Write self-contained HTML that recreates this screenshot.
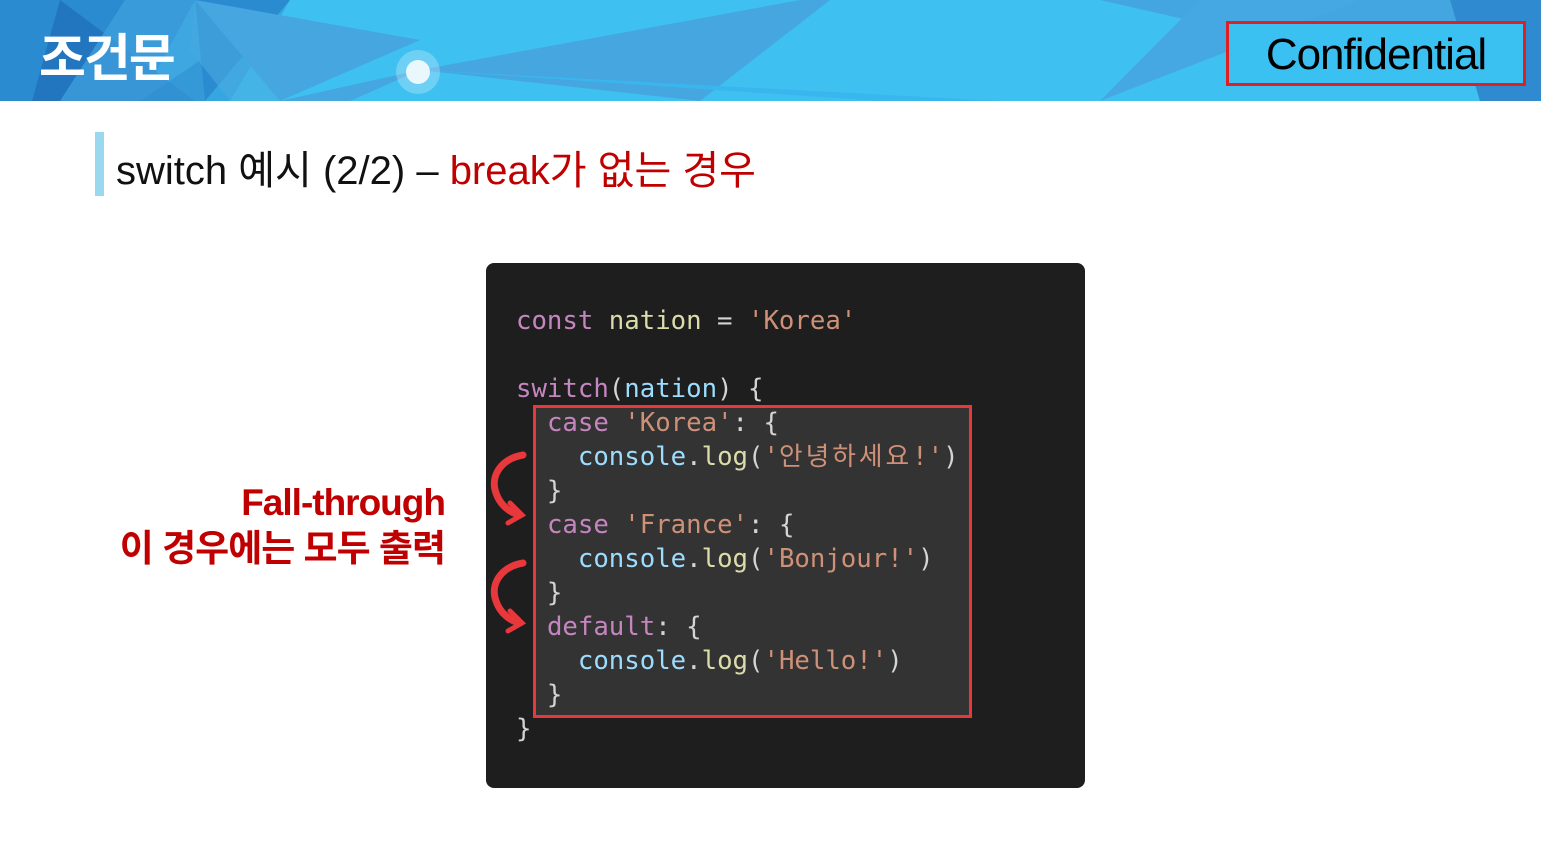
<!DOCTYPE html><html><head><meta charset="utf-8"><style>
body{margin:0;width:1541px;height:865px;background:#fff;position:relative;overflow:hidden;font-family:"Liberation Sans","Noto Sans CJK KR",sans-serif}
.hdr{position:absolute;left:0;top:0;width:1541px;height:101px;background:#3ec0f0;overflow:hidden}
.code{position:absolute;left:486px;top:263px;width:599px;height:525px;background:#1e1e1e;border-radius:8px}
.hl{position:absolute;left:533px;top:405px;width:433px;height:307px;background:#333;border:3px solid #e8383b}
pre{position:absolute;left:516px;top:304px;margin:0;font-family:"DejaVu Sans Mono","Noto Sans CJK KR",monospace;font-size:25.7px;line-height:34px;color:#d4d4d4}
.k{color:#c586c0}.v{color:#dcdcaa}.s{color:#ce9178}.c{color:#9cdcfe}.f{color:#dcdcaa}
</style></head><body>
<div class="hdr"><svg width="1541" height="101" style="position:absolute;left:0;top:0">
<polygon points="0,0 195,0 140,101 0,101" fill="#2b8bd0"/>
<polygon points="60,0 195,101 32,101" fill="#2276c0"/>
<polygon points="125,0 195,0 205,101 60,101" fill="#3f9fdc" opacity=".8"/>
<polygon points="195,0 290,0 205,101" fill="#2b8bd0"/>
<polygon points="290,0 140,101 230,101" fill="#2b8bd0" opacity=".5"/>
<polygon points="195,0 280,101 420,40" fill="#45a6e0"/>
<polygon points="195,0 280,101 230,101 190,50" fill="#4aaae0" opacity=".6"/>
<polygon points="420,70 280,101 350,101" fill="#45a6e0"/>
<polygon points="420,70 700,101 830,0 800,0" fill="#45a6e0"/>
<polygon points="420,70 880,101 1000,101" fill="#3ab6ee"/>
<polygon points="1100,0 1540,100 1541,0" fill="#44a6e0"/>
<polygon points="1200,0 1360,0 1100,101" fill="#46a8e2"/>
<polygon points="1450,0 1541,0 1541,101 1480,101" fill="#2f8ad0"/>
<circle cx="418" cy="72" r="12" fill="#fff" opacity=".85"/><circle cx="418" cy="72" r="22" fill="#fff" opacity=".25"/>
</svg>
<div style="position:absolute;left:39px;top:17px;font-size:51px;font-weight:bold;color:#fff;letter-spacing:-2px">조건문</div>
<div style="position:absolute;left:1226px;top:21px;width:294px;height:59px;border:3px solid #e02020;box-sizing:content-box;background:#3bc0f2;color:#000;font-size:44px;text-align:center;line-height:62px;letter-spacing:-1px">Confidential</div>
</div>
<div style="position:absolute;left:95px;top:132px;width:9px;height:64px;background:#9ad8f0"></div>
<div style="position:absolute;left:116px;top:138px;font-size:40px;color:#111;white-space:nowrap">switch 예시 (2/2) – <span style="color:#c00000">break가 없는 경우</span></div>
<div style="position:absolute;right:1096px;top:480px;font-size:37px;font-weight:bold;color:#c00000;text-align:right;line-height:46px;white-space:nowrap;letter-spacing:-1px">Fall-through<br>이 경우에는 모두 출력</div>
<div class="code"></div><div class="hl"></div>
<svg width="60" height="200" style="position:absolute;left:480px;top:445px" fill="none" stroke="#e8383b" stroke-width="7" stroke-linecap="round">
<path d="M43,10 C20,14 10,32 16,48 C20,60 30,68 40,70"/><path d="M30,58 L42,70 L28,78" stroke-width="5"/>
<path d="M43,118 C20,122 10,140 16,156 C20,168 30,176 40,178"/><path d="M30,166 L42,178 L28,186" stroke-width="5"/>
</svg>
<pre><span class="k">const</span> <span class="v">nation</span> = <span class="s">'Korea'</span>

<span class="k">switch</span>(<span class="c">nation</span>) {
  <span class="k">case</span> <span class="s">'Korea'</span>: {
    <span class="c">console</span>.<span class="f">log</span>(<span class="s">'<span style="letter-spacing:3px">안녕하세요</span>!'</span>)
  }
  <span class="k">case</span> <span class="s">'France'</span>: {
    <span class="c">console</span>.<span class="f">log</span>(<span class="s">'Bonjour!'</span>)
  }
  <span class="k">default</span>: {
    <span class="c">console</span>.<span class="f">log</span>(<span class="s">'Hello!'</span>)
  }
}</pre>
</body></html>
